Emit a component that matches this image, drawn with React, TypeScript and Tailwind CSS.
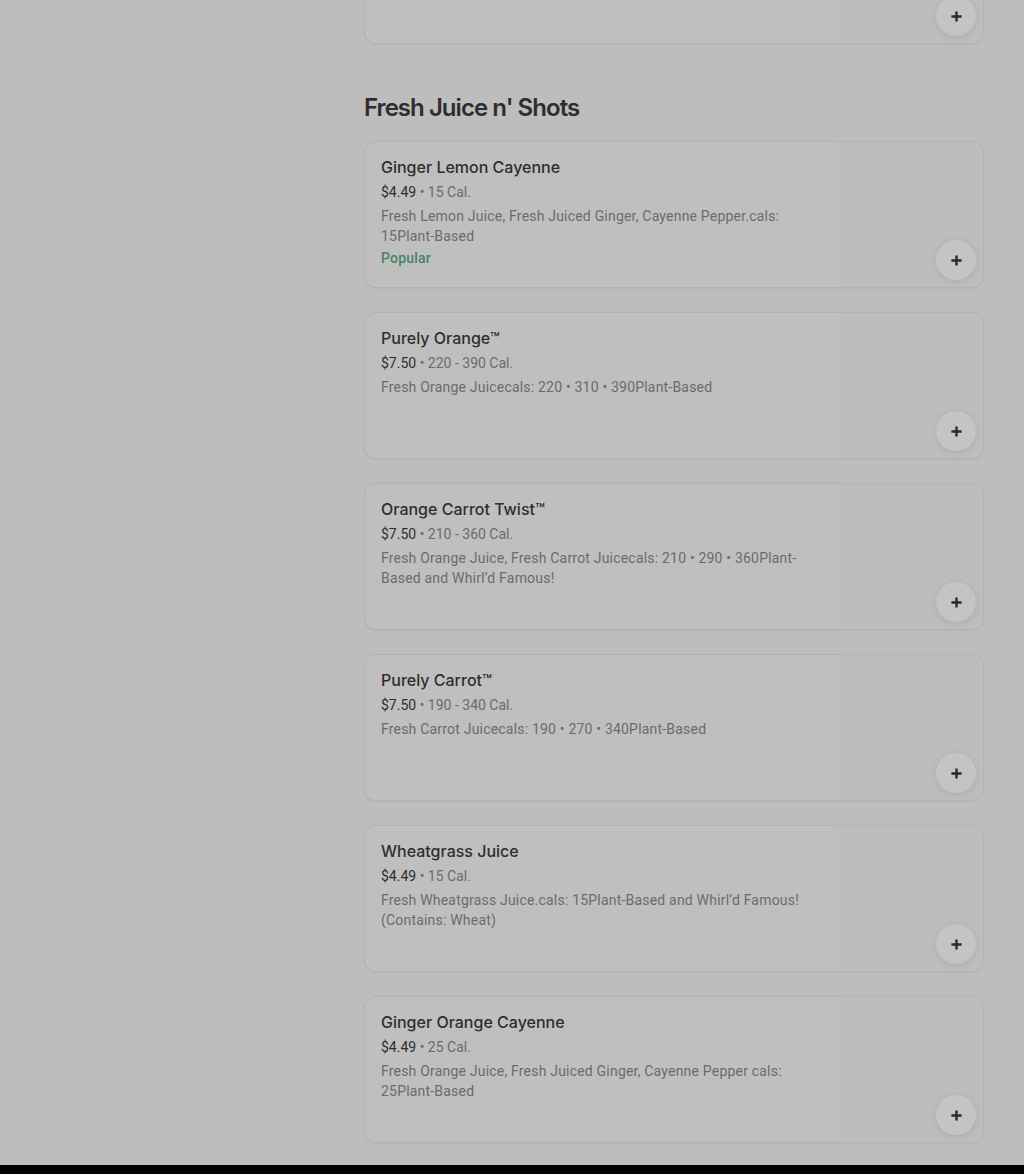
import React from 'react'

type Item = {
  name: string
  price: string
  cal: string
  desc: string
  popular?: boolean
}

const items: Item[] = [
  {
    name: 'Ginger Lemon Cayenne',
    price: '$4.49',
    cal: '15 Cal.',
    desc: 'Fresh Lemon Juice, Fresh Juiced Ginger, Cayenne Pepper.cals: 15Plant-Based',
    popular: true,
  },
  {
    name: 'Purely Orange™',
    price: '$7.50',
    cal: '220 - 390 Cal.',
    desc: 'Fresh Orange Juicecals: 220 • 310 • 390Plant-Based',
  },
  {
    name: 'Orange Carrot Twist™',
    price: '$7.50',
    cal: '210 - 360 Cal.',
    desc: 'Fresh Orange Juice, Fresh Carrot Juicecals: 210 • 290 • 360Plant-Based and Whirl’d Famous!',
  },
  {
    name: 'Purely Carrot™',
    price: '$7.50',
    cal: '190 - 340 Cal.',
    desc: 'Fresh Carrot Juicecals: 190 • 270 • 340Plant-Based',
  },
  {
    name: 'Wheatgrass Juice',
    price: '$4.49',
    cal: '15 Cal.',
    desc: 'Fresh Wheatgrass Juice.cals: 15Plant-Based and Whirl’d Famous! (Contains: Wheat)',
  },
  {
    name: 'Ginger Orange Cayenne',
    price: '$4.49',
    cal: '25 Cal.',
    desc: 'Fresh Orange Juice, Fresh Juiced Ginger, Cayenne Pepper cals: 25Plant-Based',
  },
]

function PlusButton() {
  return (
    <button className="absolute right-[7px] bottom-[7px] w-10 h-10 rounded-full bg-[#c4c4c4] shadow-[0_1px_6px_rgba(0,0,0,0.1)] flex items-center justify-center">
      <svg width="13" height="13" viewBox="0 0 14 14" fill="none">
        <path d="M7 1.5v11M1.5 7h11" stroke="#2a2a2a" strokeWidth="2.6" />
      </svg>
    </button>
  )
}

function ItemCard({ item }: { item?: Item }) {
  return (
    <div className="h-[147px] flex rounded-xl border border-[#b3b3b3] bg-[#bfbfbf] overflow-hidden shadow-[0_1px_2px_rgba(0,0,0,0.04)]">
      <div className="flex-1 pl-4 pr-6 pt-[13px] min-w-0">
        {item && (
          <>
            <div className="text-[16px] leading-6 font-medium text-[#2e2e2e] font-['Inter',sans-serif]">
              {item.name}
            </div>
            <div className="mt-[3px] text-[14px] leading-5 font-['Roboto',sans-serif]">
              <span className="text-[#2e2e2e]">{item.price}</span>
              <span className="text-[#6b6b6b]"> • {item.cal}</span>
            </div>
            <p className="mt-1 text-[14px] leading-5 tracking-[0.2px] text-[#6b6b6b] font-['Roboto',sans-serif] max-w-[430px]">
              {item.desc}
            </p>
            {item.popular && (
              <div className="mt-[2px] text-[14px] leading-5 tracking-[0.2px] font-medium text-[#468468] font-['Roboto',sans-serif]">
                Popular
              </div>
            )}
          </>
        )}
      </div>
      <div className="relative w-[144px] shrink-0 bg-[#bdbdbd]">
        <PlusButton />
      </div>
    </div>
  )
}

export default function App() {
  return (
    <div className="min-h-[1174px] bg-[#bdbdbd] flex flex-col overflow-hidden">
      <div className="flex-1 flex">
        <div className="w-[364px] shrink-0" />
        <div className="w-[620px] shrink-0">
          <div className="-mt-[103px]">
            <ItemCard />
          </div>
          <h2 className="mt-12 text-[24px] leading-8 font-semibold tracking-[-0.04em] text-[#2e2e2e] font-['Inter',sans-serif]">
            Fresh Juice n' Shots
          </h2>
          <div className="mt-[17px] flex flex-col gap-6">
            {items.map((it) => (
              <ItemCard key={it.name} item={it} />
            ))}
          </div>
          <div className="h-[22px]" />
        </div>
      </div>
      <div className="h-[10px] bg-black" />
    </div>
  )
}
